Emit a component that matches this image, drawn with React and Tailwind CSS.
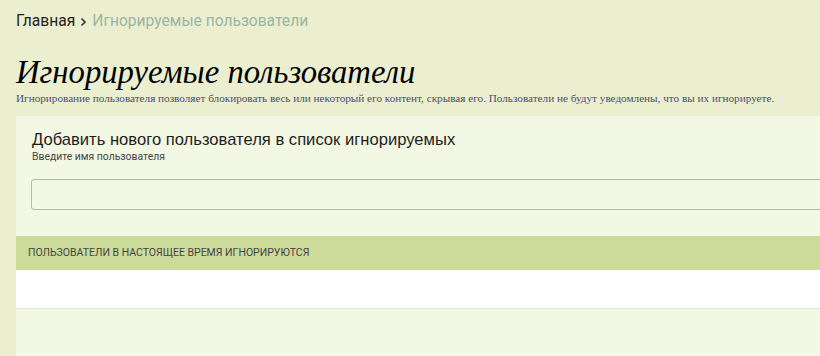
export default function App() {
  return (
    <div className="w-[820px] h-[356px] overflow-hidden bg-[#ebefd0] pl-4">
      {/* Хлебные крошки */}
      <div className="pt-[12px] flex items-center text-[15.6px] leading-[19px] font-['Roboto',sans-serif]">
        <span className="text-[#222]">Главная</span>
        <svg className="mx-[5px]" width="7" height="10" viewBox="0 0 7 10" fill="none">
          <path d="M1.5 1.5 L5 5 L1.5 8.5" stroke="#333" strokeWidth="1.6" />
        </svg>
        <span className="text-[#9bb5a3]">Игнорируемые пользователи</span>
      </div>

      <h1 className="mt-[23px] text-[32.7px] leading-[36px] italic font-['Liberation_Serif',serif] text-black">
        Игнорируемые пользователи
      </h1>
      <p className="mt-[1px] text-[11.2px] leading-[14px] font-['Liberation_Serif',serif] text-[#4c4c7c]">
        Игнорирование пользователя позволяет блокировать весь или некоторый его контент, скрывая его. Пользователи не будут уведомлены, что вы их игнорируете.
      </p>

      {/* Панель */}
      <div className="mt-[11px] w-[830px] bg-[#f3f8e4]">
        <div className="px-4 pt-[14px] pb-[26px]">
          <h2 className="text-[16.6px] leading-[20px] text-[#1e1e1e] font-['Liberation_Sans',sans-serif]">
            Добавить нового пользователя в список игнорируемых
          </h2>
          <div className="text-[10.4px] leading-[13px] text-[#444] font-['Roboto',sans-serif]">
            Введите имя пользователя
          </div>
          <input
            type="text"
            className="mt-[16px] -ml-px block w-[830px] h-[31px] rounded-[3px] border border-[#b3b8b3] bg-[#f3f8e4] outline-none"
          />
        </div>
        <div className="h-[34px] bg-[#cddb9a] flex items-center pl-3 text-[10.5px] uppercase text-[#444] font-['Roboto',sans-serif]">
          Пользователи в настоящее время игнорируются
        </div>
        <div className="h-[39px] bg-white border-b border-[#e3e6da]"></div>
        <div className="h-[60px]"></div>
      </div>
    </div>
  );
}
